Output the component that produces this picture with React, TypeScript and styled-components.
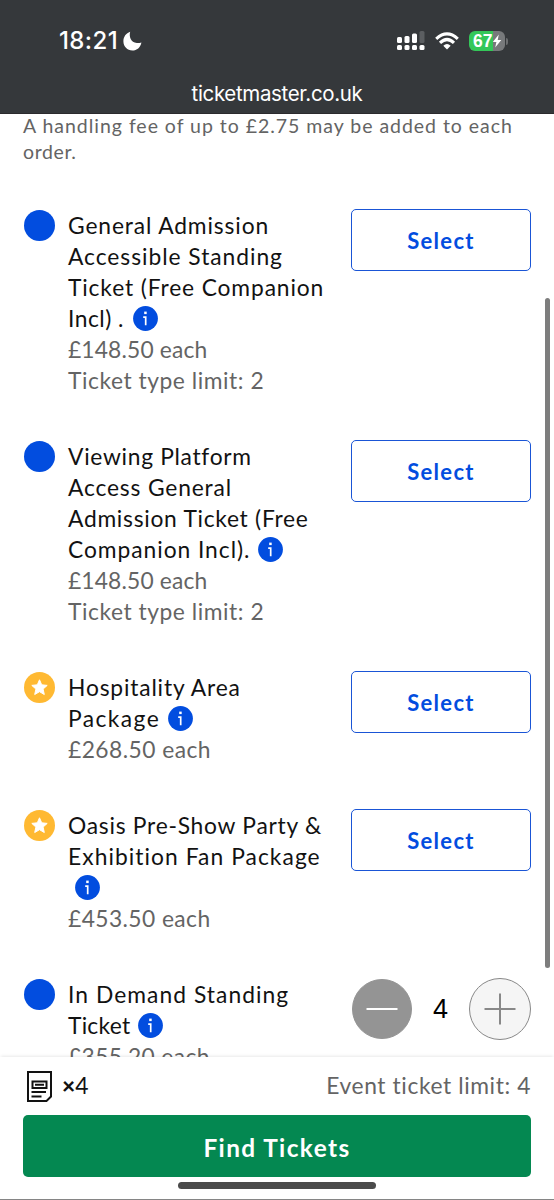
import React from 'react';
import styled, { createGlobalStyle } from 'styled-components';

const GlobalStyle = createGlobalStyle`
  *, *::before, *::after { box-sizing: border-box; }
  html, body { margin: 0; padding: 0; background: #fff; }
  body { font-family: Lato, sans-serif; overflow: hidden; }
  button { font: inherit; cursor: pointer; padding: 0; }
`;

const Screen = styled.div`
  position: relative;
  display: flex;
  flex-direction: column;
  width: 554px;
  height: 1200px;
  overflow: hidden;
  background: #fff;
  border-bottom: 1px solid #858585;
`;

const BrowserHeader = styled.header`
  flex: none;
  display: flex;
  flex-direction: column;
  height: 114px;
  background: #35383b;
  color: #fff;
  font-family: Inter, sans-serif;
  border-bottom: 1px solid #2b2a2d;
`;

const StatusBar = styled.div`
  display: flex;
  align-items: center;
  justify-content: space-between;
  height: 82px;
  padding: 0 46px 0 59px;
`;

const Clock = styled.div`
  display: flex;
  align-items: center;
  gap: 5px;
  font-size: 24px;
  font-weight: 500;
  letter-spacing: 0.4px;
  line-height: 28px;
`;

const StatusIcons = styled.div`
  display: flex;
  align-items: center;
  gap: 10px;
`;

const Battery = styled.div`
  display: flex;
  align-items: center;
  gap: 1px;
`;

const BatteryBody = styled.div`
  display: flex;
  align-items: center;
  width: 36px;
  height: 20px;
  padding-left: 4px;
  border-radius: 6px;
  background: linear-gradient(90deg, #34c759 24px, #77797b 24px);
  font-family: "Liberation Sans", sans-serif;
  font-size: 17.5px;
  font-weight: 700;
  letter-spacing: -0.1px;
  line-height: 20px;
`;

const BatteryTip = styled.div`
  width: 2px;
  height: 7px;
  border-radius: 0 2px 2px 0;
  background: #6c6e70;
`;

const Address = styled.div`
  text-align: center;
  font-size: 20.5px;
  line-height: 24px;
  letter-spacing: -0.35px;
`;

const Content = styled.main`
  flex: 1;
  min-height: 0;
  overflow: hidden;
  padding: 0 23px;
`;

const Line = styled.span<{ $tracking?: number }>`
  display: block;
  height: 1lh;
  white-space: nowrap;
  letter-spacing: ${p => p.$tracking ?? 1}px;
`;

const FeeNote = styled.p`
  margin: -1px 0 0;
  height: 96px;
  font-size: 19.5px;
  line-height: 25.5px;
  color: #646464;
`;

const TicketList = styled.div`
  display: flex;
  flex-direction: column;
  gap: 45px;
`;

const TicketRow = styled.section`
  display: flex;
  align-items: flex-start;
`;

const Marker = styled.div<{ $color: string }>`
  flex: none;
  display: flex;
  align-items: center;
  justify-content: center;
  width: 31px;
  height: 31px;
  margin: 1px 13px 0 1px;
  border-radius: 50%;
  background: ${p => p.$color};
`;

const TicketText = styled.div`
  flex: 1;
  min-width: 0;
  margin: 1px 0 -1px;
  font-size: 22.8px;
  line-height: 31px;
  color: #121212;
`;

const Muted = styled.div`
  color: #646464;
`;

const InfoIcon = styled.svg<{ $offset: number }>`
  display: inline-block;
  vertical-align: -4px;
  margin-left: ${p => p.$offset}px;
`;

const SelectButton = styled.button`
  flex: none;
  width: 180px;
  height: 62px;
  border: 1.5px solid #1a55d6;
  border-radius: 5px;
  background: #fff;
  color: #024ddf;
  font-size: 22px;
  font-weight: 700;
  letter-spacing: 1.3px;
`;

const Stepper = styled.div`
  flex: none;
  display: flex;
  align-items: center;
  justify-content: space-between;
  width: 180px;
  height: 62px;
  padding-left: 1px;
`;

const StepButton = styled.button<{ $filled?: boolean }>`
  display: flex;
  align-items: center;
  justify-content: center;
  width: ${p => (p.$filled ? 60 : 62)}px;
  height: ${p => (p.$filled ? 60 : 62)}px;
  border-radius: 50%;
  border: 1px solid ${p => (p.$filled ? '#949494' : '#888')};
  background: ${p => (p.$filled ? '#949494' : '#f5f5f5')};
`;

const Quantity = styled.span`
  color: #000;
  font-family: "Liberation Sans", sans-serif;
  font-size: 27px;
`;

const ScrollThumb = styled.div`
  position: absolute;
  left: 545px;
  top: 298px;
  width: 5px;
  height: 670px;
  border-radius: 3px;
  background: #7d7d7d;
`;

const Footer = styled.footer`
  flex: none;
  display: flex;
  flex-direction: column;
  height: 142px;
  padding: 0 23px;
  background: #fff;
  box-shadow: 0 -2px 3px -1px rgba(0, 0, 0, 0.09);
  z-index: 1;
`;

const Summary = styled.div`
  display: flex;
  align-items: center;
  justify-content: space-between;
  height: 58.5px;
  font-size: 22.8px;
  line-height: 28px;
`;

const Count = styled.div`
  display: flex;
  align-items: center;
  gap: 10px;
  padding-left: 4px;
  color: #121212;
`;

const CountText = styled.span`
  padding-bottom: 3px;
`;

const Times = styled.b`
  font-weight: 900;
`;

const Limit = styled.div`
  padding-bottom: 3px;
  color: #646464;
  letter-spacing: 0.6px;
`;

const FindButton = styled.button`
  height: 62px;
  margin-top: -0.5px;
  padding-top: 3px;
  border: 0;
  border-radius: 5px;
  background: #048851;
  color: #fff;
  font-size: 24.4px;
  font-weight: 700;
  letter-spacing: 1.4px;
`;

const HomeIndicator = styled.div`
  align-self: center;
  width: 198px;
  height: 7px;
  margin-top: 5px;
  border-radius: 4px;
  background: #4b4b4b;
`;

type Ticket = {
  kind: 'standard' | 'package';
  name: [string, number][];
  iconOffset: number;
  iconOnNewLine?: boolean;
  details: [string, number][];
  quantity?: number;
};

const tickets: Ticket[] = [
  {
    kind: 'standard',
    name: [['General Admission', 0.87], ['Accessible Standing', 0.96], ['Ticket (Free Companion', 0.87], ['Incl) .', 0.5]],
    iconOffset: 9.2,
    details: [['£148.50 each', 0.15], ['Ticket type limit: 2', 0.55]],
  },
  {
    kind: 'standard',
    name: [['Viewing Platform', 0.7], ['Access General', 0.83], ['Admission Ticket (Free', 0.72], ['Companion Incl).', 0.95]],
    iconOffset: 7.6,
    details: [['£148.50 each', 0.15], ['Ticket type limit: 2', 0.55]],
  },
  {
    kind: 'package',
    name: [['Hospitality Area', 0.83], ['Package', 1.43]],
    iconOffset: 8,
    details: [['£268.50 each', 0.45]],
  },
  {
    kind: 'package',
    name: [['Oasis Pre-Show Party &', 0.75], ['Exhibition Fan Package', 1.06]],
    iconOffset: 7,
    iconOnNewLine: true,
    details: [['£453.50 each', 0.42]],
  },
  {
    kind: 'standard',
    name: [['In Demand Standing', 1.05], ['Ticket', 0.25]],
    iconOffset: 7.6,
    details: [['£355.20 each', 0.35]],
    quantity: 4,
  },
];

const Info = ({ offset }: { offset: number }) => (
  <InfoIcon $offset={offset} width="25" height="25" viewBox="0 0 25 25">
    <circle cx="12.5" cy="12.5" r="12.4" fill="#024ddf" />
    <rect x="11.2" y="5.6" width="2.5" height="2.5" fill="#fff" />
    <path d="M10.200 11.200h2.500v8" fill="none" stroke="#fff" strokeWidth="1.700" />
  </InfoIcon>
);

const Star = () => (
  <svg width="19" height="19" viewBox="0 0 19 19">
    <path
      d="M9.5 1.8l2.2 5 5.5.6-4.1 3.7 1.2 5.4-4.8-2.8-4.8 2.8 1.2-5.4L1.8 7.4l5.500-.6z"
      fill="#fff"
      stroke="#fff"
      strokeLinejoin="round"
    />
  </svg>
);

const TicketItem = ({ ticket }: { ticket: Ticket }) => {
  const last = ticket.name.length - 1;
  return (
    <TicketRow>
      <Marker $color={ticket.kind === 'package' ? '#ffb932' : '#024ddf'}>
        {ticket.kind === 'package' && <Star />}
      </Marker>
      <TicketText>
        {ticket.name.map(([text, tracking], i) => (
          <Line key={text} $tracking={tracking}>
            {text}
            {i === last && !ticket.iconOnNewLine && <Info offset={ticket.iconOffset} />}
          </Line>
        ))}
        {ticket.iconOnNewLine && <Line><Info offset={ticket.iconOffset} /></Line>}
        <Muted>
          {ticket.details.map(([text, tracking]) => (
            <Line key={text} $tracking={tracking}>{text}</Line>
          ))}
        </Muted>
      </TicketText>
      {ticket.quantity === undefined ? (
        <SelectButton>Select</SelectButton>
      ) : (
        <Stepper>
          <StepButton $filled aria-label="Remove one">
            <svg width="32" height="32" viewBox="0 0 32 32">
              <path d="M.5 16h31" stroke="#fff" strokeWidth="2" />
            </svg>
          </StepButton>
          <Quantity>{ticket.quantity}</Quantity>
          <StepButton aria-label="Add one">
            <svg width="32" height="32" viewBox="0 0 32 32">
              <path d="M.5 16h31M16 .5v31" stroke="#888" strokeWidth="2" />
            </svg>
          </StepButton>
        </Stepper>
      )}
    </TicketRow>
  );
};

export default function App() {
  return (
    <Screen>
      <GlobalStyle />
      <BrowserHeader>
        <StatusBar>
          <Clock>
            <span>18:21</span>
            <svg width="19" height="20" viewBox="0 0 19 20">
              <path
                d="M7.200.8C5.800 5.500 7.800 11.800 13.800 12c1.600.1 3.200-.1 4.600-.6C17.600 16.300 13.800 19.500 9.400 19.500 4.300 19.500.4 15.500.4 10.300.4 5.800 3 2.200 7.200.8z"
                fill="#fff"
              />
            </svg>
          </Clock>
          <StatusIcons>
            <svg width="28" height="20" viewBox="0 0 28 20" fill="#fff">
              <rect x="0" y="6" width="5" height="6" rx="1.5" />
              <rect x="7.500" y="5" width="5" height="7" rx="1.500" />
              <rect x="15" y="2.500" width="5" height="9.500" rx="1.500" />
              <rect x="22.500" y="0" width="5" height="12" rx="1.500" fill="#5b5e61" />
              <rect x="0" y="14" width="5" height="5" rx="1.500" />
              <rect x="7.500" y="14" width="5" height="5" rx="1.500" />
              <rect x="15" y="14" width="5" height="5" rx="1.500" />
              <rect x="22.500" y="14" width="5" height="5" rx="1.500" />
            </svg>
            <svg width="24" height="18" viewBox="0 0 24 18" fill="none" stroke="#fff" strokeWidth="3.100">
              <path d="M1.200 6.800Q12-3 22.800 6.800" />
              <path d="M5 10.800Q12 4.200 19 10.800" />
              <path d="M12 17.600L8.300 13.700Q12 10.400 15.700 13.700z" fill="#fff" stroke="none" />
            </svg>
            <Battery>
              <BatteryBody>
                67
                <svg width="10" height="14" viewBox="0 0 10 14">
                  <path d="M6.800.5L.8 8h3.600L3.200 13.500 9.300 5.900H5.700z" fill="#fff" />
                </svg>
              </BatteryBody>
              <BatteryTip />
            </Battery>
          </StatusIcons>
        </StatusBar>
        <Address>ticketmaster.co.uk</Address>
      </BrowserHeader>
      <Content>
        <FeeNote>
          <Line $tracking={0.97}>A handling fee of up to £2.75 may be added to each</Line>
          <Line $tracking={0.6}>order.</Line>
        </FeeNote>
        <TicketList>
          {tickets.map(ticket => (
            <TicketItem key={ticket.name[0][0]} ticket={ticket} />
          ))}
        </TicketList>
      </Content>
      <Footer>
        <Summary>
          <Count>
            <svg width="25" height="31" viewBox="0 0 25 31" fill="none" stroke="#121212" strokeWidth="2">
              <path d="M1 1h23v24.500L19.500 30H1z" />
              <path d="M5.500 10.500h14v6.500h-14zM8 13.700h9M4.500 21h14.500M4.500 25.500h10" />
            </svg>
            <CountText><Times>×</Times>4</CountText>
          </Count>
          <Limit>Event ticket limit: 4</Limit>
        </Summary>
        <FindButton>Find Tickets</FindButton>
        <HomeIndicator />
      </Footer>
      <ScrollThumb />
    </Screen>
  );
}
